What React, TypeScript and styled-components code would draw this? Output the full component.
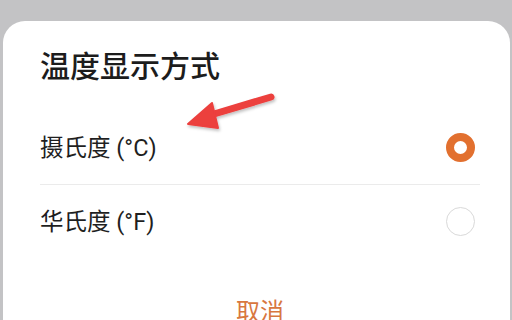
import styled, { createGlobalStyle } from 'styled-components';

const GlobalStyle = createGlobalStyle`
  html, body {
    margin: 0;
    padding: 0;
    background: #c3c3c5;
    font-family: Roboto, "Noto Sans CJK SC", "Noto Sans", sans-serif;
  }
`;

const Screen = styled.div`
  position: relative;
  width: 512px;
  height: 320px;
  overflow: hidden;
  padding: 21px 2px 0 3px;
  box-sizing: border-box;
`;

const Sheet = styled.div`
  background: #fff;
  border-radius: 22px 22px 0 0;
  height: 100%;
  padding: 26px 30px 0 37px;
  box-sizing: border-box;
  display: flex;
  flex-direction: column;
`;

const Title = styled.h2`
  margin: 0;
  font-size: 30px;
  line-height: 40px;
  font-weight: 500;
  color: #1c1c1c;
`;

const Options = styled.div`
  margin-top: 24px;
  display: flex;
  flex-direction: column;
`;

const Option = styled.div<{ $divider?: boolean }>`
  height: 73px;
  display: flex;
  align-items: center;
  justify-content: space-between;
  border-bottom: ${(p) => (p.$divider ? '1px solid #ebebeb' : 'none')};
`;

const Label = styled.span`
  font-size: 23.5px;
  line-height: 30px;
  color: #1f1f1f;
`;

const Radio = styled.span<{ $checked?: boolean }>`
  width: 29px;
  height: 29px;
  margin-right: 5px;
  border-radius: 50%;
  box-sizing: border-box;
  border: ${(p) => (p.$checked ? '8px solid #e2702f' : '1.5px solid #d9d9d9')};
  background: #fff;
`;

const Cancel = styled.button`
  margin-top: 38px;
  align-self: center;
  background: none;
  border: none;
  padding: 0;
  font-family: inherit;
  font-size: 24px;
  line-height: 32px;
  color: #d8773f;
`;

const Arrow = styled.svg`
  position: absolute;
  left: 180px;
  top: 86px;
  overflow: visible;
`;

function PointerArrow() {
  return (
    <Arrow width="100" height="50" viewBox="0 0 100 50">
      <defs>
        <filter id="shade" x="-20%" y="-40%" width="140%" height="180%">
          <feDropShadow dx="1" dy="2" stdDeviation="1.5" floodColor="#000" floodOpacity="0.25" />
        </filter>
      </defs>
      <g filter="url(#shade)" fill="#ec3f3e" stroke="#ec3f3e">
        <line x1="91" y1="11" x2="34" y2="28" strokeWidth="7" strokeLinecap="round" />
        <polygon points="8,38 32,17 38,42" strokeWidth="2" strokeLinejoin="round" />
      </g>
    </Arrow>
  );
}

const options = [
  { label: '摄氏度 (°C)', checked: true },
  { label: '华氏度 (°F)', checked: false },
];

export default function App() {
  return (
    <>
      <GlobalStyle />
      <Screen>
        <Sheet>
          <Title>温度显示方式</Title>
          <Options>
            {options.map((o, i) => (
              <Option key={o.label} $divider={i < options.length - 1}>
                <Label>{o.label}</Label>
                <Radio $checked={o.checked} />
              </Option>
            ))}
          </Options>
          <Cancel>取消</Cancel>
        </Sheet>
        <PointerArrow />
      </Screen>
    </>
  );
}
